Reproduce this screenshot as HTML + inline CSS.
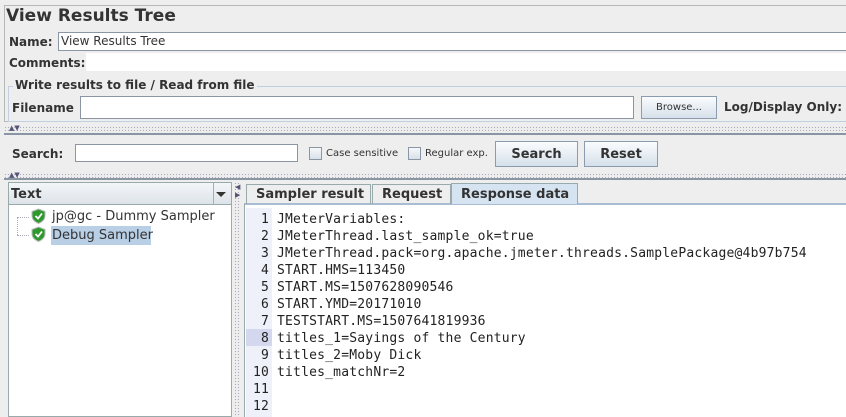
<!DOCTYPE html>
<html><head><meta charset="utf-8"><style>
*{box-sizing:border-box;margin:0;padding:0}
body{width:846px;height:417px;overflow:hidden;background:#eeeeee;font-family:"DejaVu Sans","Liberation Sans",sans-serif;font-size:13px;color:#333;position:relative}
.a{position:absolute;white-space:nowrap}
.b{font-weight:bold}
.lb{font-weight:bold;font-size:12px}
.in{position:absolute;background:#fff;border:1px solid #8a96a4}
.btn{position:absolute;border:1px solid #8a9cb0;background:linear-gradient(#fafcfe,#d6e0ea);text-align:center;color:#333}
.dots{position:absolute;left:4px;right:0;height:5px;background-image:radial-gradient(#aab 0.6px,transparent 0.8px);background-size:3px 3px}
.cb{position:absolute;width:13px;height:13px;border:1px solid #8a96a4;background:linear-gradient(#f6f8fa,#d8e0e8)}
.mono{font-family:"DejaVu Sans Mono","Liberation Mono",monospace;font-size:13px;color:#222;letter-spacing:0.2px}
</style></head><body>
<div class="a" style="left:4px;top:5px;right:0;height:117px;border:1px solid #b8b8b8;border-right:none"></div>
<div class="a b" style="left:6px;top:6px;font-size:17px;color:#333">View Results Tree</div>
<div class="a lb" style="left:9px;top:35px">Name:</div>
<div class="in" style="left:58px;top:32px;right:0;height:19px;border-right:none"><span style="position:absolute;left:2px;top:1px;font-size:12px">View Results Tree</span></div>
<div class="a" style="left:86px;top:53px;right:0;height:18px;background:#fff"></div>
<div class="a lb" style="left:9px;top:56px">Comments:</div>
<div class="a" style="left:8px;top:86px;right:0;height:36px;border:1px solid #c0d0e0;border-right:none"></div>
<div class="a lb" style="left:13px;top:78px;background:#eee;padding:0 2px">Write results to file / Read from file</div>
<div class="a lb" style="left:12px;top:101px">Filename</div>
<div class="in" style="left:80px;top:96px;width:554px;height:23px"></div>
<div class="btn" style="left:641px;top:96px;width:76px;height:23px;font-size:10px;line-height:21px">Browse...</div>
<div class="a lb" style="left:724px;top:100px">Log/Display Only:</div>
<div class="dots" style="top:126px"></div>
<div class="a" style="left:9px;top:124px;font-size:7px;color:#557">▲▼</div>
<div class="a" style="left:4px;top:133px;right:0;height:2px;background:#8a96a4"></div>
<div class="a lb" style="left:12px;top:147px">Search:</div>
<div class="in" style="left:75px;top:144px;width:223px;height:18px"></div>
<div class="cb" style="left:309px;top:147px"></div>
<div class="a" style="left:326px;top:148px;font-size:10px">Case sensitive</div>
<div class="cb" style="left:408px;top:147px"></div>
<div class="a" style="left:425px;top:148px;font-size:10px">Regular exp.</div>
<div class="btn b" style="left:495px;top:141px;width:83px;height:26px;line-height:25px">Search</div>
<div class="btn b" style="left:584px;top:141px;width:74px;height:26px;line-height:25px">Reset</div>
<div class="dots" style="top:173px"></div>
<div class="a" style="left:9px;top:171px;font-size:7px;color:#557">▲▼</div>
<div class="a" style="left:4px;top:178px;right:0;height:2px;background:#8a96a4"></div>
<!-- left tree -->
<div class="a" style="left:8px;top:182px;width:224px;height:235px;background:#fff;border:1px solid #9aa"></div>
<div class="a" style="left:9px;top:183px;width:222px;height:22px;background:linear-gradient(#f4f6f8,#dde3ea);border-bottom:1px solid #9aa"></div>
<div class="a b" style="left:11px;top:187px">Text</div>
<div class="a" style="left:213px;top:183px;width:1px;height:22px;background:#aab"></div>
<div class="a" style="left:216px;top:192px;width:0;height:0;border-left:5px solid transparent;border-right:5px solid transparent;border-top:5px solid #333"></div>
<div class="a" style="left:17px;top:218px;width:1px;height:17px;border-left:1px dotted #aab"></div>
<div class="a" style="left:17px;top:217px;width:12px;border-top:1px dotted #aab"></div>
<div class="a" style="left:17px;top:235px;width:12px;border-top:1px dotted #aab"></div>
<svg class="a" style="left:31px;top:208px" width="15" height="34" viewBox="0 0 15 34">
<path d="M7.5 1 L14 3.5 V8 C14 12 11 14 7.5 15.5 C4 14 1 12 1 8 V3.5Z" fill="#2e9a2e" stroke="#bbb"/>
<path d="M4.5 8 L7 10.5 L11 5.5" stroke="#fff" stroke-width="1.8" fill="none"/>
<path d="M7.5 19 L14 21.5 V26 C14 30 11 32 7.5 33.5 C4 32 1 30 1 26 V21.5Z" fill="#2e9a2e" stroke="#bbb"/>
<path d="M4.5 26 L7 28.5 L11 23.5" stroke="#fff" stroke-width="1.8" fill="none"/>
</svg>
<div class="a" style="left:52px;top:209px">jp@gc - Dummy Sampler</div>
<div class="a" style="left:51px;top:226px;width:100px;height:19px;background:#b8cfe5"></div>
<div class="a" style="left:52px;top:228px">Debug Sampler</div>
<!-- divider -->
<div class="a" style="left:234px;top:182px;width:6px;height:235px;background-image:radial-gradient(#aab 0.6px,transparent 0.8px);background-size:3px 3px"></div>
<div class="a" style="left:235px;top:183px;font-size:7px;color:#557;line-height:8px">◀<br>▶</div>
<!-- tabs -->
<div class="a" style="left:244px;top:203px;right:0;height:214px;background:#fff;border-top:2px solid #a8bcd4;border-left:1px solid #9aa"></div>
<div class="a b" style="left:246px;top:184px;width:125px;height:20px;border:1px solid #9aa;border-bottom:none;padding-left:9px;line-height:20px">Sampler result</div>
<div class="a b" style="left:372px;top:184px;width:79px;height:20px;border:1px solid #9aa;border-bottom:none;padding-left:9px;line-height:20px">Request</div>
<div class="a b" style="left:451px;top:183px;width:127px;height:21px;border:1px solid #9aa;border-bottom:none;background:#d6e4f2;padding-left:9px;line-height:21px">Response data</div>
<div class="a" style="left:246px;top:208px;width:26px;height:209px;background:#eef0fa"></div>
<div class="a" style="left:246px;top:329px;width:26px;height:17px;background:#d4d8ee"></div>
<div class="a mono" style="left:246px;top:211px;width:23px;text-align:right;line-height:17px;white-space:normal">1<br>2<br>3<br>4<br>5<br>6<br>7<br>8<br>9<br>10<br>11<br>12</div>
<div class="a mono" style="left:277px;top:211px;line-height:17px;white-space:pre">JMeterVariables:
JMeterThread.last_sample_ok=true
JMeterThread.pack=org.apache.jmeter.threads.SamplePackage@4b97b754
START.HMS=113450
START.MS=1507628090546
START.YMD=20171010
TESTSTART.MS=1507641819936
titles_1=Sayings of the Century
titles_2=Moby Dick
titles_matchNr=2</div>
</body></html>
